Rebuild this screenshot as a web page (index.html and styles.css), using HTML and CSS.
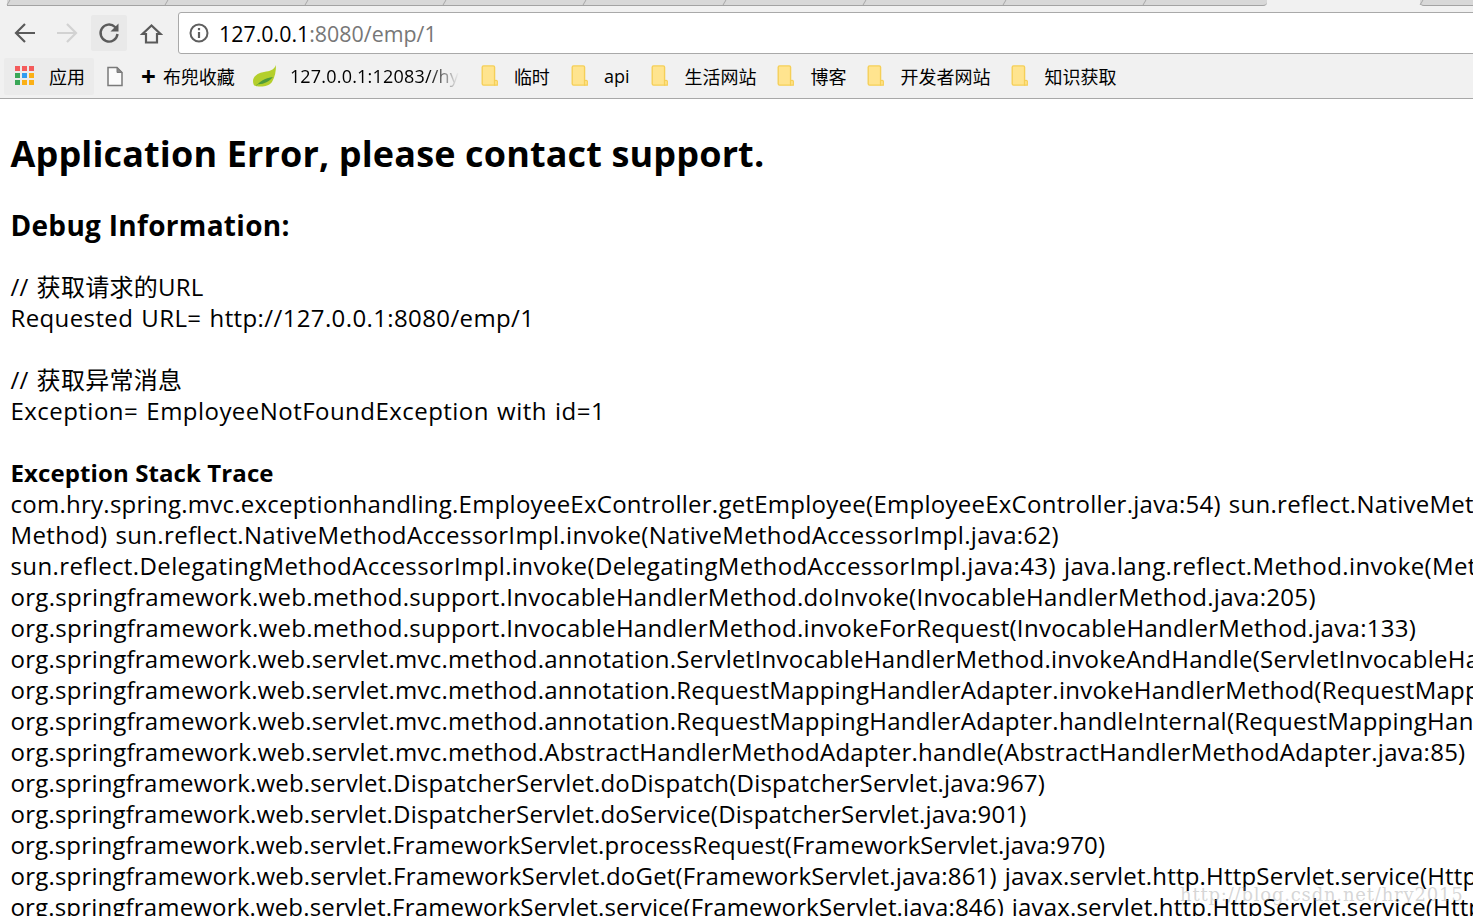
FILE: index.html
```html
<!DOCTYPE html>
<html lang="zh">
<head>
<meta charset="utf-8">
<title>Application Error</title>
<link rel="stylesheet" href="styles.css">
</head>
<body>
<header class="chrome">
  <div class="tabs">
    <div class="tab t1"></div><div class="tab"></div><div class="tab"></div><div class="tab"></div><div class="tab"></div><div class="tab"></div><div class="tab"></div><div class="tab"></div><div class="tab t9"></div>
    <div class="tab-active"></div>
    <div class="tab t-last"></div>
  </div>
  <div class="toolbar">
    <svg class="nav-icon" viewBox="0 0 24 24"><path d="M22 12H4M12 3L3 12l9 9" fill="none" stroke="#5a5a5a" stroke-width="2.200"/></svg>
    <svg class="nav-icon fwd" viewBox="0 0 24 24"><path d="M2 12h18M12 3l9 9-9 9" fill="none" stroke="#d2d2d2" stroke-width="2.200"/></svg>
    <div class="reload"><svg class="nav-icon" viewBox="0 0 24 24"><path d="M20.500 13a8.500 8.500 0 1 1-2.500-7L20 8" fill="none" stroke="#5a5a5a" stroke-width="2.400"/><path d="M21.500 2.500V10.500h-8z" fill="#5a5a5a"/></svg></div>
    <svg class="nav-icon home" viewBox="0 0 24 24"><path d="M12.500 4.500L3.500 13H7V21.500H18V13H21.500Z" fill="none" stroke="#5a5a5a" stroke-width="2.200"/></svg>
    <div class="omnibox">
      <svg class="info" viewBox="0 0 20 20"><circle cx="10" cy="10" r="8.500" fill="none" stroke="#5f5f5f" stroke-width="2"/><path d="M10 9v6M10 5v2.200" stroke="#5f5f5f" stroke-width="2.200"/></svg>
      <span class="host">127.0.0.1</span><span class="path">:8080/emp/1</span>
    </div>
  </div>
  <div class="bookmarks">
    <div class="bm apps">
      <svg class="apps-icon" viewBox="0 0 20 20">
        <rect x="0" y="0" width="5" height="5" fill="#f45b5b"/><rect x="7" y="0" width="5" height="5" fill="#f45b5b"/><rect x="14" y="0" width="5" height="5" fill="#f45b5b"/>
        <rect x="0" y="7" width="5" height="5" fill="#3aa757"/><rect x="7" y="7" width="5" height="5" fill="#2f9bf0"/><rect x="14" y="7" width="5" height="5" fill="#fbb016"/>
        <rect x="0" y="14" width="5" height="5" fill="#3aa757"/><rect x="7" y="14" width="5" height="5" fill="#fbb016"/><rect x="14" y="14" width="5" height="5" fill="#fbb016"/>
      </svg>
      <span>应用</span>
    </div>
    <div class="bm page">
      <svg class="page-icon" viewBox="0 0 16 20"><path d="M1 1H10L15 6V19H1z" fill="#fbfbfb" stroke="#7a7a7a" stroke-width="1.500"/><path d="M10 1V6H15z" fill="#8a8a8a" stroke="#7a7a7a" stroke-width="1"/></svg>
    </div>
    <div class="bm collect"><span class="plus">+</span><span>布兜收藏</span></div>
    <div class="bm spring">
      <svg class="leaf" viewBox="0 0 24 24"><path d="M23 1C21 6 17 7 11 8 4 9 0 13 0 17c0 3 1 5 3 5 5 1 12 1 16-4 3-5 4-11 4-17z" fill="#b4cf2c"/><path d="M3 23C5 18 12 14 20 13 16 18 9 21 4 20z" fill="#4f9a3c"/></svg>
      <span class="fade-label">127.0.0.1:12083//hy</span>
    </div>
    <div class="bm folder-item"><svg class="folder" viewBox="0 0 19 24"><use href="#folder"/></svg><span>临时</span></div>
    <div class="bm folder-item"><svg class="folder" viewBox="0 0 19 24"><use href="#folder"/></svg><span>api</span></div>
    <div class="bm folder-item wider"><svg class="folder" viewBox="0 0 19 24"><use href="#folder"/></svg><span>生活网站</span></div>
    <div class="bm folder-item"><svg class="folder" viewBox="0 0 19 24"><use href="#folder"/></svg><span>博客</span></div>
    <div class="bm folder-item"><svg class="folder" viewBox="0 0 19 24"><use href="#folder"/></svg><span>开发者网站</span></div>
    <div class="bm folder-item"><svg class="folder" viewBox="0 0 19 24"><use href="#folder"/></svg><span>知识获取</span></div>
  </div>
  <svg class="defs" width="0" height="0"><defs><g id="folder"><path d="M1 2.500a1.500 1.500 0 0 1 1.500-1.500H13a1.500 1.500 0 0 1 1.500 1.500V22H2.500A1.500 1.500 0 0 1 1 20.500z" fill="#ffe48f" stroke="#f5cf57" stroke-width="1.500"/><path d="M14.500 22V17.500a1.800 1.800 0 0 1 3 0V22z" fill="#ffe48f" stroke="#f5cf57" stroke-width="1.300"/></g></defs></svg>
</header>
<main class="content">
  <h1>Application Error, please contact support.</h1>
  <h2>Debug Information:</h2>
  <div class="line">// 获取请求的URL</div>
  <div class="line wide">Requested URL= http://127.0.0.1:8080/emp/1</div>
  <div class="line blank"></div>
  <div class="line">// 获取异常消息</div>
  <div class="line widest">Exception= EmployeeNotFoundException with id=1</div>
  <div class="line blank"></div>
  <div class="line strong">Exception Stack Trace</div>
  <div class="line">com.hry.spring.mvc.exceptionhandling.EmployeeExController.getEmployee(EmployeeExController.java:54) sun.reflect.NativeMethodAccessorImpl.invoke0(Native</div>
  <div class="line loose">Method) sun.reflect.NativeMethodAccessorImpl.invoke(NativeMethodAccessorImpl.java:62)</div>
  <div class="line wide">sun.reflect.DelegatingMethodAccessorImpl.invoke(DelegatingMethodAccessorImpl.java:43) java.lang.reflect.Method.invoke(Method.java:498)</div>
  <div class="line snug">org.springframework.web.method.support.InvocableHandlerMethod.doInvoke(InvocableHandlerMethod.java:205)</div>
  <div class="line snug">org.springframework.web.method.support.InvocableHandlerMethod.invokeForRequest(InvocableHandlerMethod.java:133)</div>
  <div class="line">org.springframework.web.servlet.mvc.method.annotation.ServletInvocableHandlerMethod.invokeAndHandle(ServletInvocableHandlerMethod.java:116)</div>
  <div class="line">org.springframework.web.servlet.mvc.method.annotation.RequestMappingHandlerAdapter.invokeHandlerMethod(RequestMappingHandlerAdapter.java:827)</div>
  <div class="line">org.springframework.web.servlet.mvc.method.annotation.RequestMappingHandlerAdapter.handleInternal(RequestMappingHandlerAdapter.java:738)</div>
  <div class="line">org.springframework.web.servlet.mvc.method.AbstractHandlerMethodAdapter.handle(AbstractHandlerMethodAdapter.java:85)</div>
  <div class="line tight">org.springframework.web.servlet.DispatcherServlet.doDispatch(DispatcherServlet.java:967)</div>
  <div class="line tight">org.springframework.web.servlet.DispatcherServlet.doService(DispatcherServlet.java:901)</div>
  <div class="line tighter">org.springframework.web.servlet.FrameworkServlet.processRequest(FrameworkServlet.java:970)</div>
  <div class="line tight">org.springframework.web.servlet.FrameworkServlet.doGet(FrameworkServlet.java:861) javax.servlet.http.HttpServlet.service(HttpServlet.java:622)</div>
  <div class="line tighter">org.springframework.web.servlet.FrameworkServlet.service(FrameworkServlet.java:846) javax.servlet.http.HttpServlet.service(HttpServlet.java:729)</div>
</main>
<div class="watermark">http://blog.csdn.net/hry2015</div>
</body>
</html>
```
FILE: styles.css
```css
html, body {
  margin: 0;
  height: 916px;
  overflow: hidden;
  background: #fff;
}
body {
  font-family: "Open Sans", "Noto Sans CJK SC", sans-serif;
  color: #000;
  position: relative;
}
.chrome {
  background: #f1f1f1;
  border-bottom: 1px solid #a8a8a8;
  height: 98px;
  overflow: hidden;
}
.defs { position: absolute; }
.tabs {
  display: flex;
  height: 6px;
  background: #f1f1f1;
}
.tab {
  position: relative;
  width: 140px;
  flex: none;
  height: 6px;
  box-sizing: border-box;
  background: #d8d8d8;
  border-bottom: 1px solid #a3a3a3;
}
.tab::before {
  content: "";
  position: absolute;
  left: 1px;
  top: 0;
  bottom: 0;
  width: 1px;
  background: #a8a8a8;
  transform: skewX(-30deg);
}
.tab:nth-child(3) { width: 138px; }
.t1 { width: 158px; margin-left: 7px; }
.t9 { width: 124px; border-bottom-right-radius: 4px; }
.tab-active { width: 153px; flex: none; }
.t-last { width: 60px; border-bottom-left-radius: 4px; }
.toolbar {
  display: flex;
  align-items: center;
  height: 48px;
  box-sizing: border-box;
  padding: 6px 0 0 13px;
}
.nav-icon { width: 24px; height: 24px; flex: none; }
.fwd { margin-left: 18px; }
.reload {
  width: 36px;
  height: 36px;
  margin-left: 12px;
  background: #e9e9e9;
  border-radius: 2px;
  display: flex;
  align-items: center;
  justify-content: center;
  flex: none;
}
.home { margin-left: 12px; }
.omnibox {
  display: flex;
  align-items: center;
  flex: none;
  width: 1320px;
  height: 42px;
  box-sizing: border-box;
  margin-left: 15px;
  background: #fff;
  border: 1px solid #a9a9a9;
  border-radius: 3px;
  font-size: 21.400px;
}
.info { width: 20px; height: 20px; margin: 0 10px 0 10px; flex: none; }
.host { color: #000; }
.path { color: #777; }
.bookmarks {
  display: flex;
  align-items: center;
  height: 44px;
  font-size: 18px;
  box-sizing: border-box;
}
.bm { display: flex; align-items: center; flex: none; white-space: nowrap; }
.apps {
  width: 90px;
  height: 37px;
  margin-left: 4px;
  padding-left: 11px;
  background: #ebebeb;
  border-radius: 2px;
  box-sizing: border-box;
}
.apps-icon { width: 20px; height: 20px; margin-right: 14px; }
.page { margin-left: 13px; }
.page-icon { width: 16px; height: 21px; }
.collect { margin-left: 18px; }
.plus { font-size: 26px; font-weight: 700; margin-right: 7px; line-height: 1; }
.spring { margin-left: 18px; width: 207px; overflow: hidden; }
.leaf { width: 24px; height: 24px; margin-right: 13px; flex: none; }
.fade-label {
  letter-spacing: 0.2px;
  background: linear-gradient(90deg, #000 82%, #f1f1f1 100%);
  -webkit-background-clip: text;
  background-clip: text;
  color: transparent;
}
.folder-item { margin-left: 21px; }
.folder-item.wider { margin-left: 22px; }
.folder { width: 18px; height: 22px; margin-right: 15px; }
.content {
  padding-left: 10.500px;
  white-space: nowrap;
  font-size: 24px;
  line-height: 31px;
  letter-spacing: 0.26px;
  word-spacing: 1.500px;
}
h1 {
  font-size: 36px;
  font-weight: 700;
  line-height: 50px;
  margin: 30px 0 0;
  letter-spacing: 0.14px;
  word-spacing: 0;
}
h2 {
  font-size: 28px;
  font-weight: 700;
  line-height: 38px;
  margin: 27px 0 27px;
  letter-spacing: 0.3px;
  word-spacing: 0;
}
.line { height: 31px; }
.snug { letter-spacing: 0.3px; }
.loose { letter-spacing: 0.336px; }
.wide { letter-spacing: 0.38px; }
.widest { letter-spacing: 0.46px; }
.tight { letter-spacing: 0.2px; }
.tighter { letter-spacing: 0.17px; }
.strong { font-weight: 700; letter-spacing: 0.1px; word-spacing: 0; }
.watermark {
  position: absolute;
  left: 1180px;
  top: 884px;
  font-family: "DejaVu Serif", serif;
  font-size: 18px;
  letter-spacing: 0.8px;
  color: rgba(150, 150, 150, 0.4);
  white-space: nowrap;
}
```
